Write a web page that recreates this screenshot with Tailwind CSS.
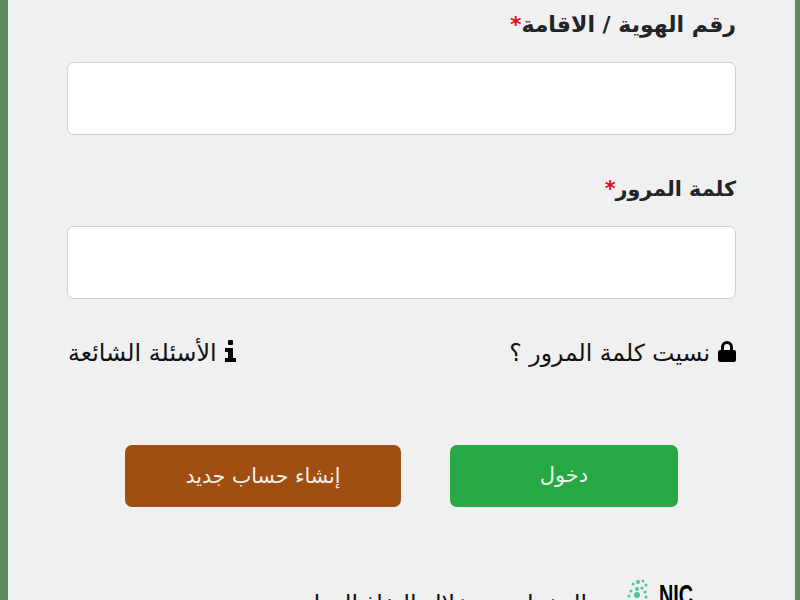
<!DOCTYPE html>
<html lang="ar" dir="rtl">
<head>
  <meta charset="UTF-8" />
  <title>تسجيل الدخول</title>
  <script src="https://cdn.jsdelivr.net/npm/@tailwindcss/browser@4"></script>
</head>
<body class="h-screen overflow-hidden bg-[#5f8a5f] font-['DejaVu_Sans',sans-serif]">
  <div class="mr-[5px] ml-[8px] h-[600px] overflow-hidden bg-[#f0f0f0] pt-[7px] pr-[59px] pl-[59px] text-[#212529]">
    <form>
      <label class="block h-[36px] text-[22px] leading-[36px] font-bold">رقم الهوية / الاقامة<span class="text-[#e01010]">*</span></label>
      <input type="text" class="mt-[19px] block h-[73px] w-full rounded-[7px] border border-[#ccd0d8] bg-white" />

      <label class="mt-[36px] block h-[36px] text-[20.7px] leading-[36px] font-bold">كلمة المرور<span class="text-[#e01010]">*</span></label>
      <input type="password" class="mt-[19px] block h-[73px] w-full rounded-[7px] border border-[#ccd0d8] bg-white" />

      <div class="mt-[36px] flex h-[36px] items-center justify-between text-[23.5px] leading-[36px] text-[#111]">
        <a class="flex items-center gap-[8px]">
          <svg class="mb-[4px] h-[21px] w-[18px]" viewBox="0 0 18 21" fill="#000">
            <path fill-rule="evenodd" d="M3 9V6a6 6 0 0 1 12 0v3h1a2 2 0 0 1 2 2v8a2 2 0 0 1-2 2H2a2 2 0 0 1-2-2v-8a2 2 0 0 1 2-2zm3 0h6V6a3 3 0 0 0-6 0z" />
          </svg>
          <span>نسيت كلمة المرور ؟</span>
        </a>
        <a class="ml-[1px] flex items-center gap-[8px]">
          <svg class="mb-[4px] h-[22px] w-[11px]" viewBox="0 0 11 22" fill="#000">
            <path d="M3 1a1 1 0 0 1 1-1h3a1 1 0 0 1 1 1v3a1 1 0 0 1-1 1H4a1 1 0 0 1-1-1zM0 8h8v10h3v4H0v-4h3v-6H0z" />
          </svg>
          <span class="text-[23.8px]">الأسئلة الشائعة</span>
        </a>
      </div>

      <div class="mt-[74px] flex justify-center gap-[49px]">
        <button type="button" class="h-[62px] w-[228px] rounded-[7px] bg-[#28a745] text-[21px] text-[#e8f5e9]">دخول</button>
        <button type="button" class="h-[62px] w-[276px] rounded-[7px] bg-[#a04e12] text-[20.5px] text-[#f8efe6]">إنشاء حساب جديد</button>
      </div>
    </form>

    <div class="mt-[71px] flex items-start gap-[41px] pr-[42px]">
      <div class="flex w-[66px] shrink-0 items-start gap-[4px]" dir="ltr">
        <svg class="-ml-[3px] h-[30px] w-[30px] shrink-0" viewBox="0 0 30 30" fill="#4fc3a1">
          <circle cx="13" cy="4" r="2" /><circle cx="18" cy="3" r="1.5" /><circle cx="8" cy="6" r="1.5" />
          <circle cx="21" cy="7" r="1.5" /><circle cx="12" cy="11" r="2" /><circle cx="17" cy="10" r="1.5" />
          <circle cx="6" cy="13" r="1.5" /><circle cx="20" cy="14" r="1.5" /><circle cx="12" cy="17" r="3" />
          <circle cx="4" cy="18" r="1.5" /><circle cx="21" cy="19" r="1.5" />
        </svg>
        <span class="mt-[2px] origin-left scale-x-[.66] font-['Liberation_Sans',sans-serif] text-[30px] leading-[30px] font-bold text-black">NIC</span>
      </div>
      <p class="mt-[11px] whitespace-nowrap text-[23.8px] leading-[30px] text-[#111]">الدخول من خلال النفاذ الوطني</p>
    </div>
  </div>
</body>
</html>
